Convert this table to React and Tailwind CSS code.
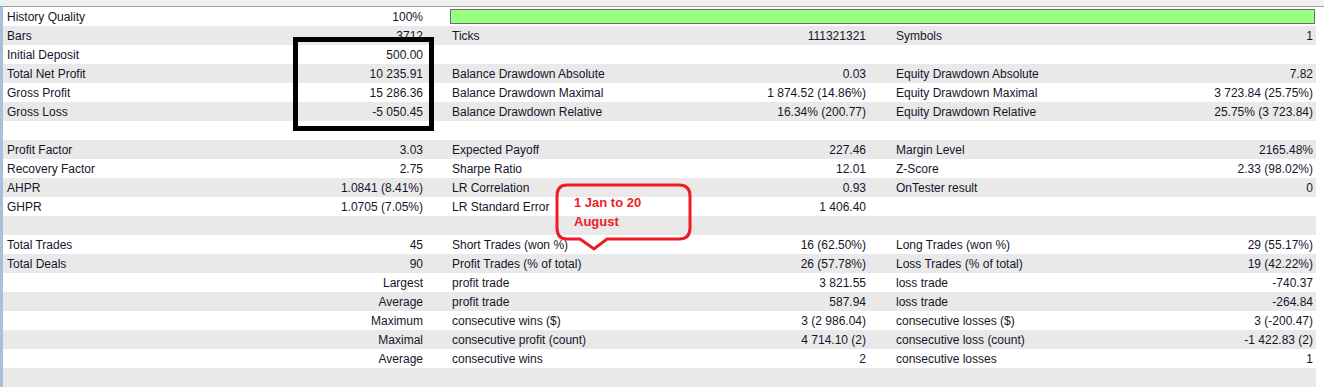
import React from "react";

const rows = [
  { a: ["History Quality", "100%"], bar: true },
  { a: ["Bars", "3712"], b: ["Ticks", "111321321"], c: ["Symbols", "1"] },
  { a: ["Initial Deposit", "500.00"] },
  { a: ["Total Net Profit", "10 235.91"], b: ["Balance Drawdown Absolute", "0.03"], c: ["Equity Drawdown Absolute", "7.82"] },
  { a: ["Gross Profit", "15 286.36"], b: ["Balance Drawdown Maximal", "1 874.52 (14.86%)"], c: ["Equity Drawdown Maximal", "3 723.84 (25.75%)"] },
  { a: ["Gross Loss", "-5 050.45"], b: ["Balance Drawdown Relative", "16.34% (200.77)"], c: ["Equity Drawdown Relative", "25.75% (3 723.84)"] },
  {},
  { a: ["Profit Factor", "3.03"], b: ["Expected Payoff", "227.46"], c: ["Margin Level", "2165.48%"] },
  { a: ["Recovery Factor", "2.75"], b: ["Sharpe Ratio", "12.01"], c: ["Z-Score", "2.33 (98.02%)"] },
  { a: ["AHPR", "1.0841 (8.41%)"], b: ["LR Correlation", "0.93"], c: ["OnTester result", "0"] },
  { a: ["GHPR", "1.0705 (7.05%)"], b: ["LR Standard Error", "1 406.40"] },
  {},
  { a: ["Total Trades", "45"], b: ["Short Trades (won %)", "16 (62.50%)"], c: ["Long Trades (won %)", "29 (55.17%)"] },
  { a: ["Total Deals", "90"], b: ["Profit Trades (% of total)", "26 (57.78%)"], c: ["Loss Trades (% of total)", "19 (42.22%)"] },
  { a: ["", "Largest"], b: ["profit trade", "3 821.55"], c: ["loss trade", "-740.37"] },
  { a: ["", "Average"], b: ["profit trade", "587.94"], c: ["loss trade", "-264.84"] },
  { a: ["", "Maximum"], b: ["consecutive wins ($)", "3 (2 986.04)"], c: ["consecutive losses ($)", "3 (-200.47)"] },
  { a: ["", "Maximal"], b: ["consecutive profit (count)", "4 714.10 (2)"], c: ["consecutive loss (count)", "-1 422.83 (2)"] },
  { a: ["", "Average"], b: ["consecutive wins", "2"], c: ["consecutive losses", "1"] },
  {},
];

function Cell({ pair, pl, pr, width }) {
  return (
    <div className={`flex justify-between h-full pt-[1px] ${pl} ${pr} ${width}`}>
      <span>{pair ? pair[0] : ""}</span>
      <span>{pair ? pair[1] : ""}</span>
    </div>
  );
}

export default function App() {
  return (
    <div
      className="relative w-[1324px] h-[389px] overflow-hidden bg-white text-[12px] text-[#15152a]"
      style={{ fontFamily: '"Liberation Sans", Arial, sans-serif' }}
    >
      <div className="h-[7px] bg-[#f0f0f0] border-b border-[#a0a0a0]" />
      <div className="flex">
        <div className="w-[3px] bg-[#a9bfdc] shrink-0" />
        <div className="w-[1313px]">
          {rows.map((r, i) => (
            <div
              key={i}
              className={`flex h-[19px] leading-[18px] ${i % 2 === 1 ? "bg-[#e9e9e9]" : "bg-white"}`}
            >
              <Cell pair={r.a} pl="pl-[4px]" pr="pr-[23px]" width="w-[443px]" />
              {r.bar ? (
                <div className="flex-1 pl-[4px] pr-[1px] pt-[2px]">
                  <div className="h-[15px] bg-[#99ff80] border border-[#707070]" />
                </div>
              ) : (
                <>
                  <Cell pair={r.b} pl="pl-[6px]" pr="pr-[23px]" width="w-[443px]" />
                  <Cell pair={r.c} pl="pl-[7px]" pr="pr-[3px]" width="w-[427px]" />
                </>
              )}
            </div>
          ))}
        </div>
        <div className="flex-1 bg-white" />
      </div>

      {/* highlight box */}
      <div className="absolute left-[293px] top-[37px] w-[141px] h-[94px] border-[5px] border-black" />

      {/* callout */}
      <svg className="absolute left-[550px] top-[180px]" width="150" height="78" viewBox="0 0 150 78">
        <path
          d="M17 5 H129 Q140 5 140 16 V48 Q140 59 129 59 H57 L44 69 L30 59 H17 Q7 59 7 48 V16 Q7 5 17 5 Z"
          fill="none"
          stroke="#ed1c24"
          strokeWidth="3"
        />
      </svg>
      <div className="absolute left-[574px] top-[193px] text-[13px] font-bold leading-[19px] text-[#ed1c24]">
        <div>1 Jan to 20</div>
        <div>August</div>
      </div>
    </div>
  );
}
